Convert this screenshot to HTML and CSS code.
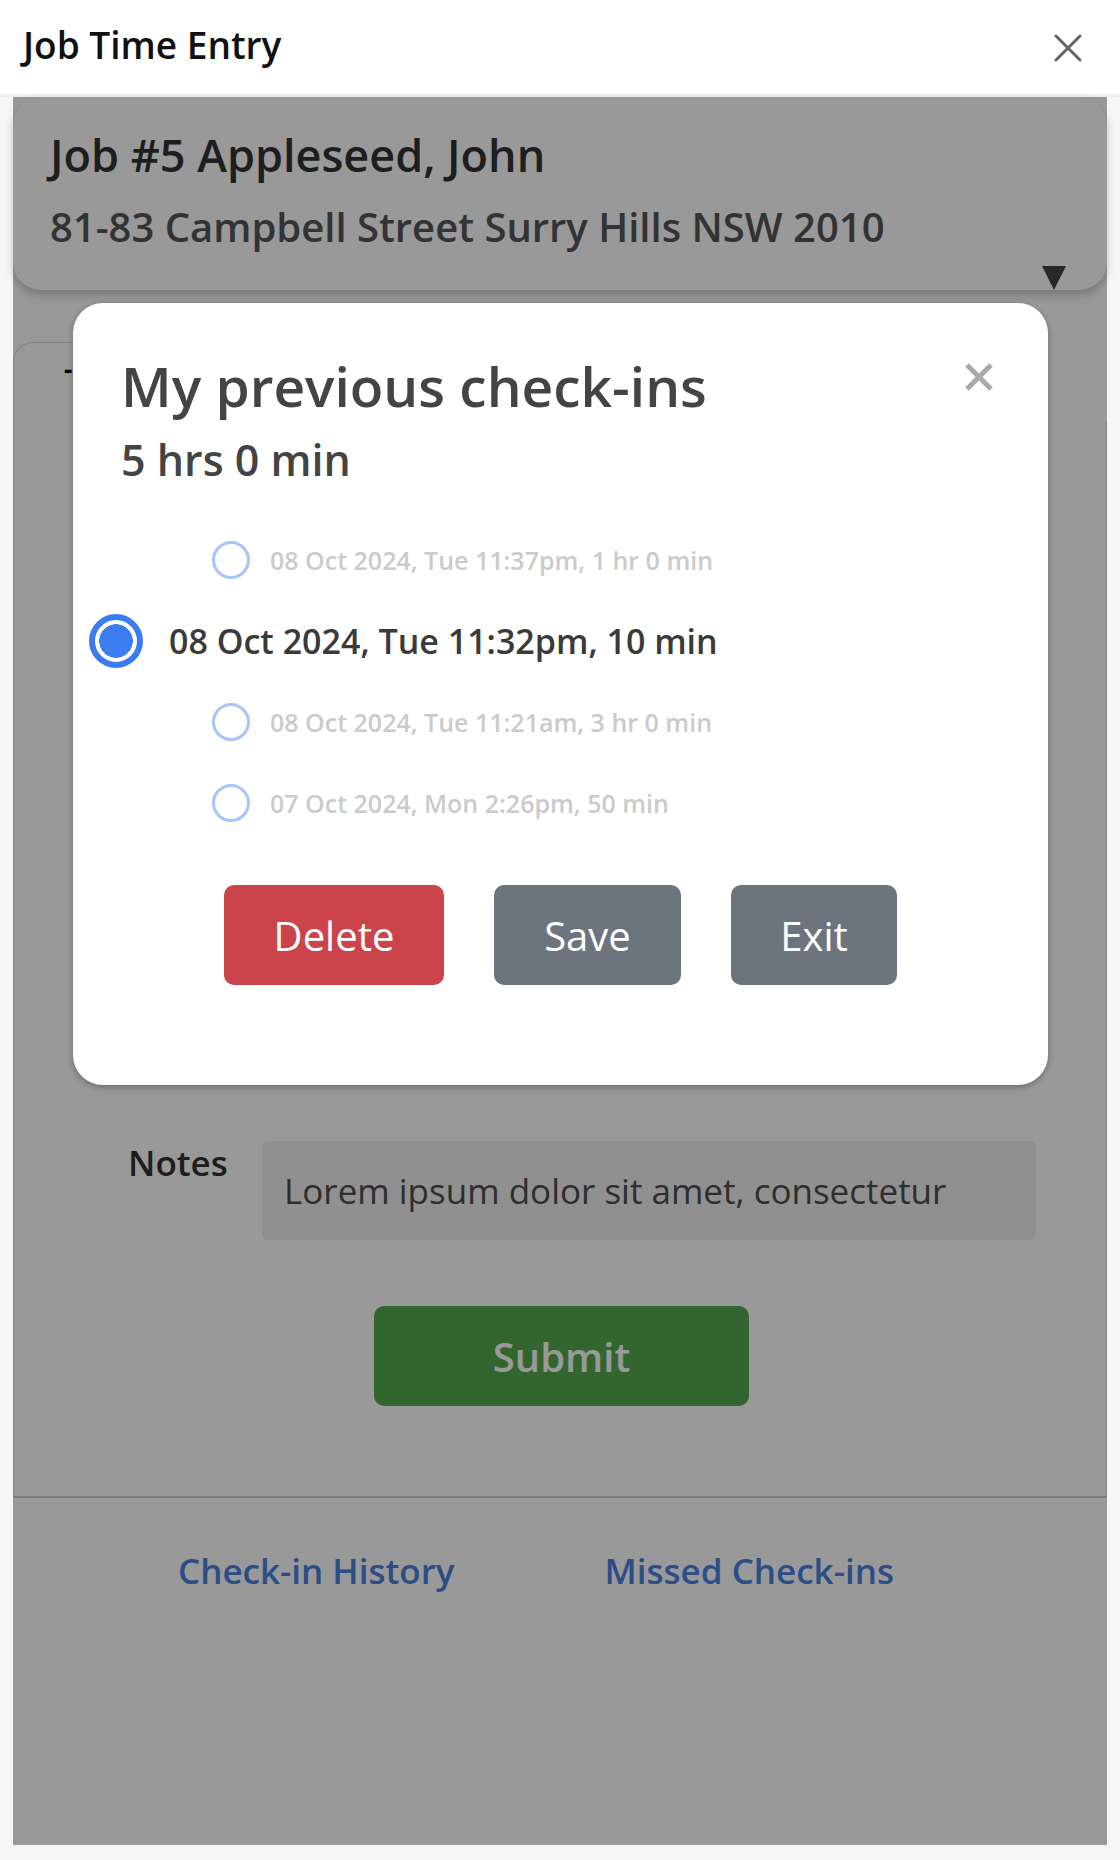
FILE: index.html
```html
<!DOCTYPE html>
<html lang="en">
<head>
<meta charset="utf-8">
<title>Job Time Entry</title>
<link rel="stylesheet" href="styles.css">
</head>
<body>
  <header class="topbar">
    <h1 class="topbar-title">Job Time Entry</h1>
    <button class="icon-btn topbar-close" aria-label="Close">
      <svg viewBox="0 0 28 28" width="28" height="28"><path d="M2 2 L26 26 M26 2 L2 26" stroke="#666" stroke-width="3" stroke-linecap="round" fill="none"/></svg>
    </button>
  </header>

  <main class="sheet">
    <section class="job-card">
      <div class="job-info">
        <div class="job-title">Job #5 Appleseed, John</div>
        <div class="job-address">81-83 Campbell Street Surry Hills NSW 2010</div>
      </div>
      <span class="job-toggle"></span>
    </section>

    <section class="entry-card">
      <div class="tab-strip">
        <div class="tab active"><span class="tab-dash">-</span></div>
      </div>
      <div class="entry-body">
        <div class="notes-row">
          <label class="notes-label">Notes</label>
          <div class="notes-input">Lorem ipsum dolor sit amet, consectetur</div>
        </div>
        <div class="submit-wrap">
          <button class="btn btn-submit">Submit</button>
        </div>
      </div>
    </section>

    <nav class="footer-links">
      <a class="link">Check-in History</a>
      <a class="link">Missed Check-ins</a>
    </nav>

    <div class="backdrop"></div>

    <div class="modal">
      <div class="modal-head">
        <div>
          <h2 class="modal-title">My previous check-ins</h2>
          <div class="modal-total">5 hrs 0 min</div>
        </div>
        <button class="icon-btn modal-close" aria-label="Close">
          <svg viewBox="0 0 30 30" width="30" height="30"><path d="M3 3 L27 27 M27 3 L3 27" stroke="#a9a9a9" stroke-width="5" fill="none"/></svg>
        </button>
      </div>

      <ul class="checkins">
        <li class="checkin"><span class="radio"></span><span class="checkin-text">08 Oct 2024, Tue 11:37pm, 1 hr 0 min</span></li>
        <li class="checkin selected"><span class="radio"></span><span class="checkin-text">08 Oct 2024, Tue 11:32pm, 10 min</span></li>
        <li class="checkin"><span class="radio"></span><span class="checkin-text">08 Oct 2024, Tue 11:21am, 3 hr 0 min</span></li>
        <li class="checkin"><span class="radio"></span><span class="checkin-text">07 Oct 2024, Mon 2:26pm, 50 min</span></li>
      </ul>

      <div class="modal-actions">
        <button class="btn btn-danger btn-delete">Delete</button>
        <button class="btn btn-secondary btn-save">Save</button>
        <button class="btn btn-secondary btn-exit">Exit</button>
      </div>
    </div>
  </main>
</body>
</html>
```

FILE: styles.css
```css
* { box-sizing: border-box; }

html, body {
  margin: 0;
  padding: 0;
}

body {
  background: #f6f6f6;
  font-family: "Open Sans", "Noto Sans", "Liberation Sans", sans-serif;
  color: #333;
}

button {
  font-family: inherit;
  border: none;
  background: none;
  padding: 0;
  cursor: pointer;
}

.icon-btn {
  display: flex;
  align-items: center;
  justify-content: center;
}

/* Top bar */
.topbar {
  height: 97px;
  background: #fff;
  border-bottom: 3px solid #eeeeee;
  display: flex;
  align-items: center;
  justify-content: space-between;
  padding: 0 38px 0 23px;
}

.topbar-title {
  margin: 0;
  font-size: 37px;
  font-weight: 600;
  color: #111;
  position: relative;
  top: -3px;
}

.topbar-close {
  width: 28px;
  height: 28px;
  position: relative;
  top: 1px;
}

/* Sheet */
.sheet {
  position: relative;
  margin: 0 13px;
  height: 1748px;
  background: #fff;
  display: flex;
  flex-direction: column;
}

.job-card {
  height: 193px;
  border-radius: 28px;
  background: #fff;
  box-shadow: 0 5px 9px rgba(0, 0, 0, 0.22);
  display: flex;
  justify-content: space-between;
  padding: 28px 41px 0 37px;
}

.job-title {
  font-size: 45px;
  font-weight: 600;
  color: #333;
  line-height: 60px;
}

.job-address {
  font-size: 40px;
  font-weight: 600;
  color: #555;
  line-height: 54px;
  margin-top: 15px;
}

.job-toggle {
  align-self: flex-end;
  width: 0;
  height: 0;
  border-left: 12.5px solid transparent;
  border-right: 12.5px solid transparent;
  border-top: 24px solid #444;
}

.entry-card {
  margin-top: 52px;
  height: 1156px;
  display: flex;
  flex-direction: column;
}

.tab-strip {
  height: 80px;
  display: flex;
}

.tab {
  width: 420px;
  border-top: 1px solid #d5d5d5;
  border-left: 1px solid #d5d5d5;
  border-top-left-radius: 20px;
  padding: 11px 0 0 50px;
}

.tab-dash {
  font-size: 26px;
  font-weight: 700;
  color: #000;
  line-height: 30px;
}

.entry-body {
  flex: 1;
  border-left: 1px solid #d5d5d5;
  border-right: 1px solid #d5d5d5;
  border-bottom: 2px solid #d0d0d0;
  padding-top: 717px;
}

.notes-row {
  display: flex;
  align-items: flex-start;
  padding-left: 114px;
  padding-right: 70px;
}

.notes-label {
  font-size: 35px;
  font-weight: 600;
  color: #333;
  line-height: 48px;
  width: 134px;
}

.notes-input {
  flex: 1;
  height: 99px;
  margin-top: 2px;
  background: #f0f0f0;
  border-radius: 6px;
  padding-left: 22px;
  display: flex;
  align-items: center;
  font-size: 35px;
  color: #4e4e4e;
}

.submit-wrap {
  display: flex;
  justify-content: center;
  margin-top: 66px;
  padding-left: 3px;
}

.btn {
  height: 100px;
  border-radius: 10px;
  padding: 0;
  font-size: 40px;
  color: #fff;
  display: flex;
  align-items: center;
  justify-content: center;
}

.btn-submit {
  width: 375px;
  background: #55ab4e;
  font-weight: 600;
  font-size: 40px;
}

.footer-links {
  display: flex;
  gap: 150px;
  padding: 49px 0 0 165px;
}

.link {
  font-size: 35px;
  font-weight: 600;
  color: #4a82df;
  text-decoration: none;
}

/* Backdrop + modal */
.backdrop {
  position: absolute;
  inset: 0;
  background: rgba(0, 0, 0, 0.4);
}

.modal {
  position: absolute;
  top: 206px;
  left: 60px;
  right: 59px;
  height: 782px;
  background: #fff;
  border-radius: 30px;
  box-shadow: 0 2px 6px rgba(0, 0, 0, 0.3);
  padding: 45px 54px 0 48px;
  display: flex;
  flex-direction: column;
}

.modal-head {
  display: flex;
  justify-content: space-between;
  align-items: flex-start;
}

.modal-title {
  margin: 0;
  font-size: 55px;
  font-weight: 600;
  color: #444;
  line-height: 75px;
}

.modal-total {
  margin-top: 8px;
  font-size: 43px;
  font-weight: 600;
  color: #444;
  line-height: 58px;
}

.modal-close {
  width: 30px;
  height: 30px;
  margin-top: 14px;
}

.checkins {
  list-style: none;
  margin: 30px 0 0 -48px;
  padding: 0;
}

.checkin {
  height: 81px;
  display: flex;
  align-items: center;
  padding-left: 139px;
}

.checkin .radio {
  width: 38px;
  height: 38px;
  border-radius: 50%;
  border: 3px solid #a7c5f7;
  background: #fff;
  flex: none;
}

.checkin .checkin-text {
  margin-left: 20px;
  font-size: 25px;
  font-weight: 600;
  color: #cbcbcb;
}

.checkin.selected {
  padding-left: 16px;
}

.checkin.selected .radio {
  width: 54px;
  height: 54px;
  border: 6px solid #3b7df0;
  background: radial-gradient(circle, #3b7df0 0 16.5px, #fff 17px);
}

.checkin.selected .checkin-text {
  margin-left: 26px;
  font-size: 34px;
  color: #3a3a3a;
}

.modal-actions {
  display: flex;
  justify-content: center;
  gap: 50px;
  margin-top: 42px;
  padding-left: 6px;
}

.btn-delete { width: 220px; }
.btn-save { width: 187px; }
.btn-exit { width: 166px; }

.btn-danger {
  background: #cc444b;
}

.btn-secondary {
  background: #6c757d;
}
```
